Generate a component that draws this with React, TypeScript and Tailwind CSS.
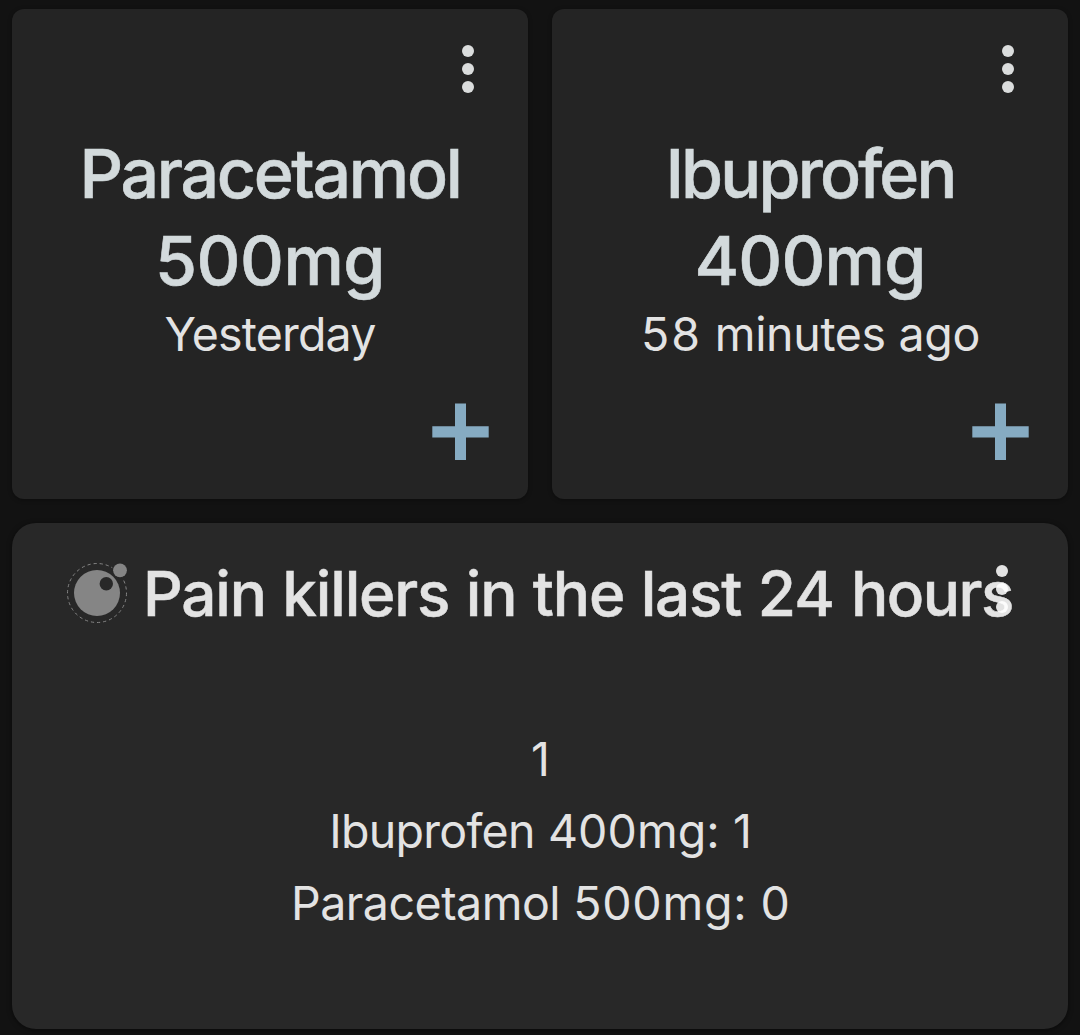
import type { ReactNode } from "react";

function MoreIcon() {
  return (
    <svg width="12" height="48" viewBox="0 0 12 48" fill="currentColor" aria-hidden="true">
      <circle cx="6" cy="6" r="6" />
      <circle cx="6" cy="24" r="6" />
      <circle cx="6" cy="42" r="6" />
    </svg>
  );
}

function PlusIcon() {
  return (
    <svg width="57" height="57" viewBox="0 0 57 57" fill="currentColor" aria-hidden="true">
      <path d="M23 .5h11v22.7h22.7v11.3H34V57H23V34.5H.3V23.2H23z" />
    </svg>
  );
}

function OrbitIcon() {
  return (
    <svg width="62" height="62" viewBox="0 0 62 62" aria-hidden="true">
      <circle cx="31" cy="31" r="29.5" fill="none" stroke="#858585" strokeWidth="1" strokeDasharray="3.2 2.95" />
      <circle cx="31" cy="31" r="23" fill="#858585" />
      <circle cx="40.3" cy="21.7" r="6.7" fill="#282828" />
      <circle cx="54" cy="8.3" r="8.2" fill="#282828" />
      <circle cx="54" cy="8.3" r="6.9" fill="#858585" />
    </svg>
  );
}

function TrackerCard({ name, dose, last }: { name: ReactNode; dose: ReactNode; last: ReactNode }) {
  return (
    <article className="flex h-[490px] flex-col rounded-xl bg-[#242424] shadow-[0_1px_4px_rgba(0,0,0,0.35)]">
      <div className="flex h-[121px] justify-end pt-9 pr-[54px] text-[#dbdddd]">
        <button className="h-12 w-3" aria-label="More options">
          <MoreIcon />
        </button>
      </div>
      <h2 className="text-center text-[68px] leading-[87px] font-medium text-[#d3dadc] [-webkit-text-stroke:0.6px_#d3dadc]">
        {name}
        {dose}
      </h2>
      <p className="text-center text-[46.5px] leading-[61px] text-[#e3e3e3]">{last}</p>
      <div className="flex flex-1 justify-end pt-[38px] pr-[39px] text-[#86abc2]">
        <button className="h-[57px] w-[57px]" aria-label="Add entry">
          <PlusIcon />
        </button>
      </div>
    </article>
  );
}

export default function App() {
  return (
    <main className="flex h-[1035px] w-[1080px] flex-col gap-6 overflow-hidden bg-[#121212] px-3 pt-[9px] font-['Inter',sans-serif]">
      <section className="grid grid-cols-2 gap-6">
        <TrackerCard
          name={<span className="block tracking-[-2.3px]">Paracetamol</span>}
          dose={<span className="block tracking-[-0.45px]">500mg</span>}
          last={<span className="tracking-[-0.8px]">Yesterday</span>}
        />
        <TrackerCard
          name={<span className="block tracking-[-2.8px]">Ibuprofen</span>}
          dose={<span className="block tracking-[-0.8px]">400mg</span>}
          last={
            <span className="pl-px tracking-[-0.35px]">
              <span className="tracking-[2px]">58</span> minutes ago
            </span>
          }
        />
      </section>

      <section className="relative flex h-[506px] flex-col rounded-3xl bg-[#282828] shadow-[0_1px_5px_rgba(0,0,0,0.5)]">
        <header className="flex h-[200px] items-start pt-[31px] pl-[54px]">
          <div className="mt-2 mr-[15px] shrink-0">
            <OrbitIcon />
          </div>
          <h2 className="text-[62px] leading-[80px] font-medium tracking-[-1.2px] whitespace-nowrap text-[#e3e3e3] [-webkit-text-stroke:0.5px_#e3e3e3] [word-spacing:1.2px]">
            Pain killers in the last <span className="tracking-[-0.6px]">24</span>{" "}
            <span className="tracking-[-1.5px]">hours</span>
          </h2>
        </header>
        <button className="absolute top-[42px] right-[60px] h-12 w-3 text-white/87" aria-label="More options">
          <MoreIcon />
        </button>
        <div className="pl-px text-center text-[46.5px] leading-[72px] text-[#e3e3e3]">
          <p>1</p>
          <p>
            <span className="tracking-[-0.7px]">Ibuprofen</span> <span className="tracking-[0.1px]">400mg:</span> 1
          </p>
          <p>
            <span className="tracking-[-0.5px]">Paracetamol</span> <span className="tracking-[0.8px]">500mg:</span> 0
          </p>
        </div>
      </section>
    </main>
  );
}
